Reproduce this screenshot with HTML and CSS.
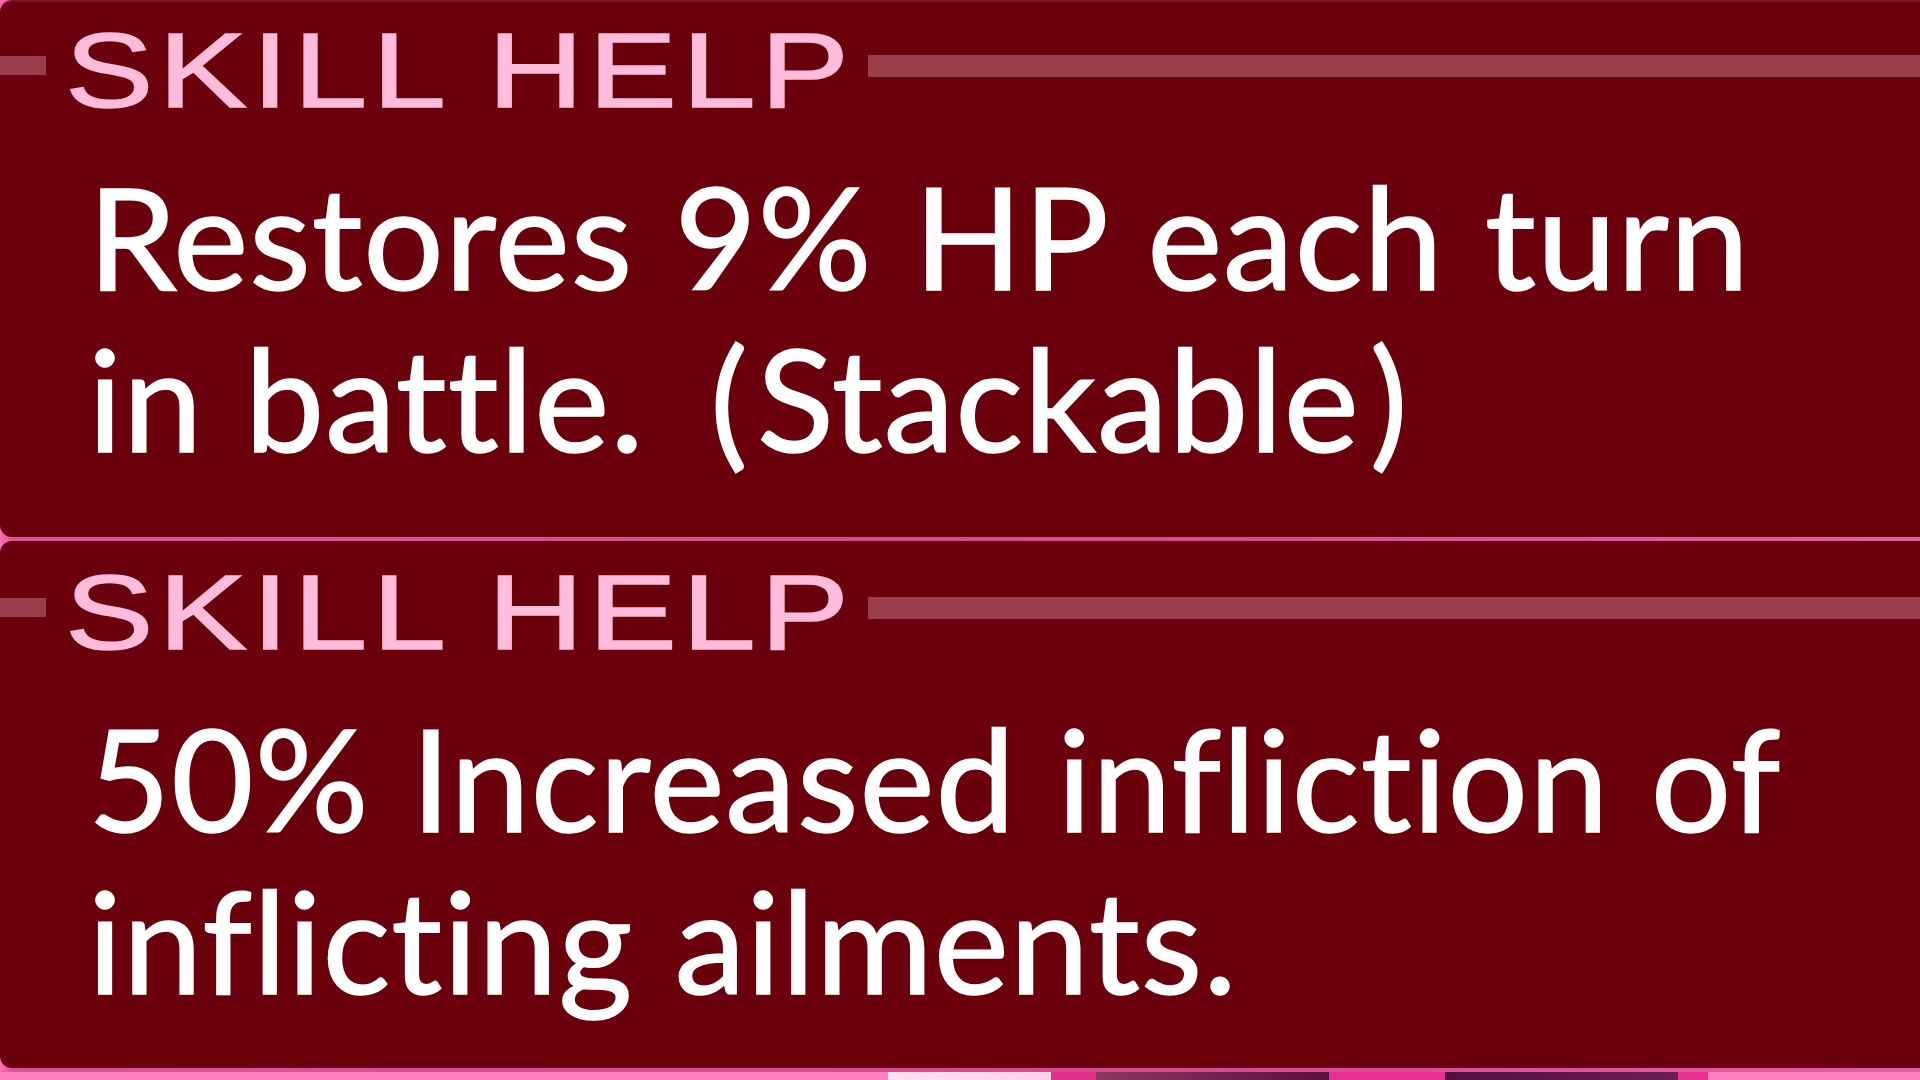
FILE: index.html
```html
<!DOCTYPE html>
<html lang="en">
<head>
    <meta charset="UTF-8">
    <meta name="viewport" content="width=device-width, initial-scale=1.0">
    <title>Skill Help</title>
    <link rel="stylesheet" href="styles.css">
</head>
<body>
    <main class="screen">
        <section class="panel panel-top">
            <div class="help-header">
                <span class="dash"></span>
                <h2>SKILL HELP</h2>
                <span class="rule"></span>
            </div>
            <p class="help-text">Restores 9% HP each turn<br>in battle. <span class="paren-open">(</span>Stackable<span class="paren-close">)</span></p>
        </section>

        <section class="panel panel-bottom">
            <div class="help-header">
                <span class="dash"></span>
                <h2>SKILL HELP</h2>
                <span class="rule"></span>
            </div>
            <p class="help-text">50% Increased infliction of<br>inflicting ailments.</p>
        </section>

        <div class="floor"></div>
    </main>
</body>
</html>
```

FILE: styles.css
```css
body {
    margin: 0;
    padding: 0;
    background-color: #d9559a;
    font-family: Lato, "Open Sans", sans-serif;
    overflow: hidden;
}
.screen {
    height: 1080px;
    display: flex;
    flex-direction: column;
    gap: 4px;
    background: linear-gradient(90deg, #ff6fb2 0, #d9559a 12px, #d4488f 60%, #e0609f 100%);
}
.panel {
    background-color: #69000b;
    border-radius: 12px 0 0 12px;
}
.panel-top {
    height: 537px;
    border-top: 2px solid #7c1426;
    box-sizing: border-box;
}
.panel-bottom {
    flex: 1;
}
.help-header {
    display: flex;
    align-items: flex-start;
    padding-top: 18px;
}
.panel-top .help-header {
    padding-top: 15px;
}
.dash {
    width: 46px;
    height: 19px;
    margin-top: 39px;
    background-color: #9a3d4c;
}
.help-header h2 {
    margin: 0 0 0 19px;
    font-family: "Liberation Sans", Arial, sans-serif;
    font-weight: normal;
    font-size: 106px;
    line-height: 106px;
    letter-spacing: 4px;
    color: #ffbddb;
    -webkit-text-stroke: 1.5px #ffbddb;
    transform: scaleX(1.25);
    transform-origin: left center;
}
.rule {
    flex: 1;
    height: 22px;
    margin-top: 38px;
    margin-left: 172px;
    background-color: #9a3d4c;
}
.help-text {
    margin: 31px 0 0 88px;
    font-size: 142px;
    line-height: 162px;
    letter-spacing: 1px;
    word-spacing: 4px;
    color: #ffffff;
    -webkit-text-stroke: 1.5px #ffffff;
    font-variant-ligatures: none;
    white-space: nowrap;
}
.paren-open {
    padding: 0 8px 0 24px;
}
.paren-close {
    padding-left: 10px;
}
.floor {
    height: 8px;
    flex-shrink: 0;
    background: linear-gradient(90deg,
        #ff80c0 0, #ff80c0 888px,
        #ffe0f0 888px, #ffd0ea 1051px,
        #e0308a 1051px, #e0308a 1096px,
        #8a3860 1096px, #5a1040 1329px,
        #e83090 1329px, #e83090 1445px,
        #501040 1445px, #6a2050 1678px,
        #e8308f 1678px, #e8308f 1708px,
        #ff80c0 1708px, #ff80c0 100%);
}
```
